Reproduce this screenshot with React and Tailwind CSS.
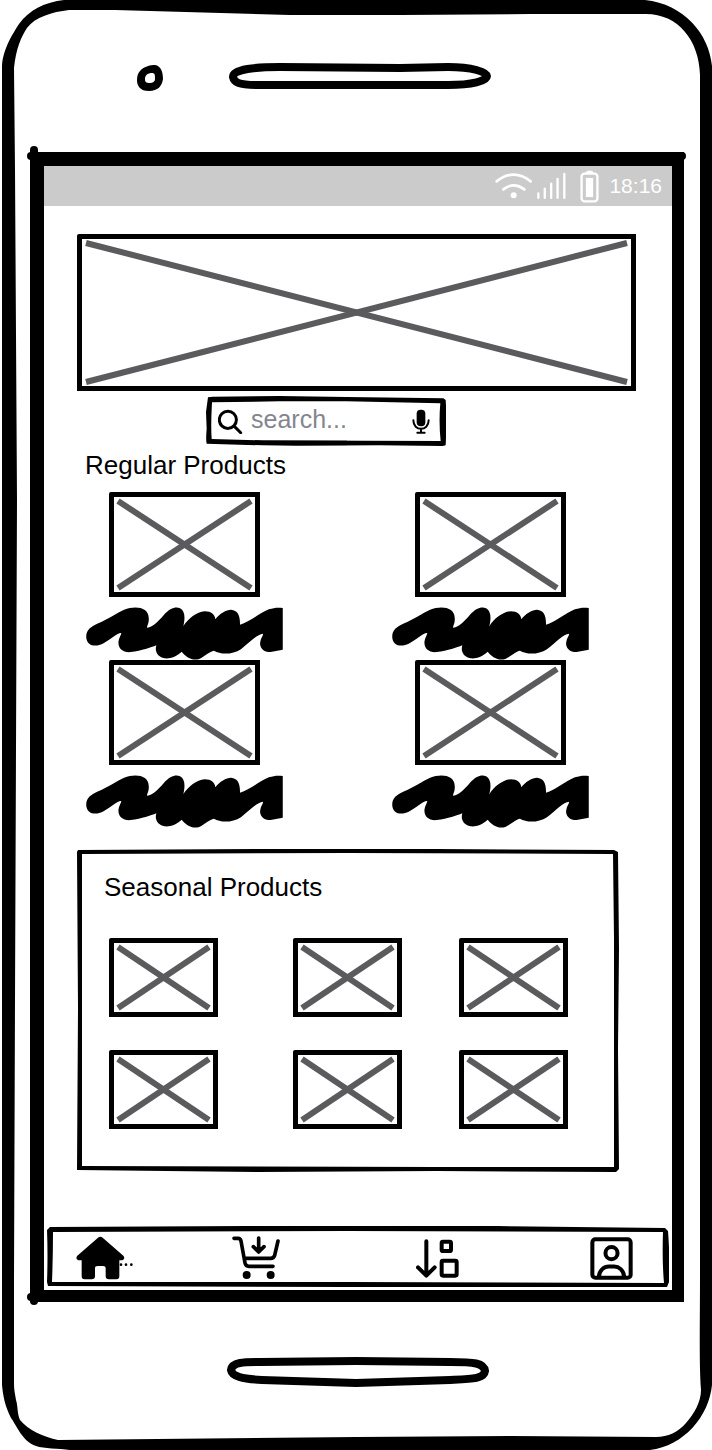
import React from "react";

function CrossBox({ className, label }) {
  return (
    <div role="img" aria-label={label} className={`rounded-tl-xs border-5 border-black p-1 ${className}`}>
      <svg className="block h-full w-full overflow-visible" aria-hidden="true">
        <line x1="0" y1="0" x2="100%" y2="100%" stroke="#5b5b5d" strokeWidth="6" />
        <line x1="0" y1="100%" x2="100%" y2="0" stroke="#5b5b5d" strokeWidth="6" />
      </svg>
    </div>
  );
}

function InkOutline({ viewBox, d }) {
  return (
    <svg
      className="pointer-events-none absolute inset-0 h-full w-full"
      viewBox={viewBox}
      preserveAspectRatio="none"
      aria-hidden="true"
    >
      <path d={d} fillRule="evenodd" />
    </svg>
  );
}

const PHONE =
  "M2 66 C3 48 14 32 19 24 C29 10 45 2 64 0 H645 C684 4 709 34 712 66 V1385 C709 1416 684 1446 650 1450 H70 C58 1448 44 1449 36 1446 C22 1441 17 1426 11 1418 C5 1406 3 1396 2 1385 Z " +
  "M14 68 C16 49 21 37 27 28 C35 17 52 12 69 10 H115 L290 15 L400 15 L530 14 H646 C678 14 699 40 700 75 L700 1270 C700 1330 699 1360 701 1390 C701 1402 694 1414 686 1423 C678 1432 668 1437 656 1437 L510 1436 L356 1437 L58 1440 C44 1437 28 1430 20 1420 C17 1413 18 1406 16 1400 C15 1394 14 1390 14 1384 V1280 L15 1000 L17 500 L15 170 Z";

const SEARCH =
  "M36 36 L50 34 L250 32 L450 35 L740 39 L747 44 Q751 100 747 180 L738 182 L550 180 L300 181 L200 180 L32 175 Q29 165 32 130 L30 80 Z " +
  "M48 51 L250 48 L450 48 L731 54 Q726 110 732 167 L500 166 L200 165 L47 161 Q44 120 48 51 Z";

const PANEL =
  "M1 1 L180 0 L360 0 L537 1 L541 3 L542 100 L541 200 L542 320 L539 323 L360 322 L180 323 L0 321 L1 160 L0 3 Z " +
  "M5 5 L270 4 L536 5 L537 90 L537 318 L360 318 L5 317 L5 160 Z";

const NAV =
  "M3 1 L200 0 L450 0 L618 2 L621 5 Q623 30 622 56 L620 61 L300 61 L1 60 L0 56 Q1 30 0 4 Z " +
  "M6 6 L300 5 L616 6 Q615 35 617 57 L300 56 L5 56 Q6 30 6 6 Z";

function Scribble() {
  return (
    <svg className="block h-[54px] w-[199px]" viewBox="45 380 597 161" role="img" aria-label="Product description">
      <path d="M45 470 C45 450 58 440 80 430 C115 414 135 400 160 388 C195 376 235 380 235 415 C236 430 228 438 230 443 C250 440 262 425 280 405 C300 382 318 378 330 384 C345 392 346 412 340 438 C355 415 380 395 405 393 C425 393 436 403 437 417 C450 400 470 388 485 388 C505 390 513 405 512 434 C540 425 570 400 600 387 C615 382 628 381 642 383 V510 L605 517 C580 517 570 500 574 485 C575 475 584 465 582 461 C565 462 545 485 515 508 C490 524 455 526 433 513 C420 515 405 530 390 537 C370 545 350 535 335 516 C320 530 300 538 283 536 C262 532 252 515 258 496 C240 503 215 512 180 517 C155 519 141 505 143 485 C144 472 153 463 151 459 C140 458 120 478 95 492 C70 504 45 495 45 470 Z" />
    </svg>
  );
}

function StatusBar() {
  return (
    <div className="flex h-10 items-center justify-end bg-[#cbcbcb] pr-2.5 text-white">
      <svg className="h-7 w-[38px]" viewBox="46 36 114 84" fill="none" stroke="currentColor" strokeWidth="8" strokeLinecap="round" aria-label="Wi-Fi">
        <path d="M51 64 Q102 24 153 64 M71 88 Q103 64 134 88" />
        <circle cx="102" cy="106" r="9" fill="currentColor" stroke="none" />
      </svg>
      <svg className="ml-1 h-7 w-[29px]" viewBox="174 38 86 82" stroke="currentColor" strokeWidth="7" strokeLinecap="round" aria-label="Signal">
        <path d="M178 101V114 M197 87V114 M216 72V114 M235 58V114 M255 43V114" />
      </svg>
      <svg className="ml-3.5 h-[33px] w-[19px]" viewBox="302 28 56 100" fill="none" stroke="currentColor" strokeWidth="7" aria-label="Battery">
        <rect x="306" y="39" width="48" height="84" rx="9" />
        <path d="M319 38 Q321 31 326 31 H335 Q340 31 342 38 Z" fill="currentColor" strokeWidth="2" />
        <rect x="319" y="52" width="22" height="58" fill="currentColor" stroke="none" />
      </svg>
      <span className="ml-2.5 text-[21px] leading-8">18:16</span>
    </div>
  );
}

function SearchBox() {
  return (
    <form role="search" className="relative ml-[129px] mt-[5px] flex h-[50px] w-60 items-center px-3" onSubmit={(e) => e.preventDefault()}>
      <InkOutline viewBox="30 32 718 150" d={SEARCH} />
      <label htmlFor="search" className="shrink-0">
        <svg className="h-[25px] w-[25px]" viewBox="65 69 76 76" fill="none" stroke="black" strokeWidth="9" strokeLinecap="round" role="img" aria-label="Search">
          <circle cx="95" cy="102" r="26" />
          <path d="M114 121 L134 141" />
        </svg>
      </label>
      <input
        id="search"
        type="text"
        placeholder="search..."
        className="ml-2 min-w-0 flex-1 bg-transparent pb-1 text-[25px] leading-8 outline-none placeholder:text-[#85858f]"
      />
      <button type="button" aria-label="Voice search">
        <svg className="mr-1 block h-[25px] w-[18px]" viewBox="651 70 54 75" fill="none" stroke="black" strokeWidth="6" strokeLinecap="round">
          <rect x="665" y="72" width="26" height="50" rx="12" fill="black" stroke="none" />
          <path d="M655 104 C655 138 701 138 701 104 M678 130 V141 M667 141 H689" />
        </svg>
      </button>
    </form>
  );
}

function BottomNav() {
  return (
    <nav aria-label="Main" className="relative mx-[3px] mb-0.5 mt-[54px] grid h-[62px] grid-cols-[156fr_185fr_174fr_43px] items-center pl-[29px] pr-9 pt-0.5">
      <InkOutline viewBox="0 0 622 62" d={NAV} />
      <button type="button" aria-label="Home" className="justify-self-start">
        <svg className="block h-[44px] w-[57px]" viewBox="107 63 171 132">
          <path d="M173 68 Q180 63 187 68 L249 122 Q256 132 246 136 H237 V184 Q237 193 228 193 H206 Q196 193 196 183 V160 Q196 153 188 153 H172 Q164 153 164 160 V183 Q164 193 154 193 H133 Q124 193 124 184 V136 H114 Q104 132 111 122 Z" />
          <circle cx="242" cy="149" r="4" />
          <circle cx="257" cy="149" r="4" />
          <circle cx="273" cy="149" r="4" />
        </svg>
      </button>
      <button type="button" aria-label="Cart" className="justify-self-start">
        <svg className="block h-[44px] w-[48px]" viewBox="576 64 144 132" fill="none" stroke="black" strokeWidth="11" strokeLinecap="round" strokeLinejoin="round">
          <path d="M582 71 H594 Q601 71 603 79 L615 145 Q617 155 627 155 H699 M613 131 H692 Q701 131 704 122 L714 79 M656 70 V110 M640 96 L656 112 L672 96" />
          <circle cx="620" cy="181" r="12" fill="black" stroke="none" />
          <circle cx="692" cy="181" r="12" fill="black" stroke="none" />
        </svg>
      </button>
      <button type="button" aria-label="Sort" className="justify-self-start">
        <svg className="block h-[39px] w-[43px]" viewBox="111 70 129 117" fill="none" stroke="black" strokeWidth="12" strokeLinecap="round" strokeLinejoin="round">
          <path d="M142 77 V178 M117 155 L142 180 L167 155" />
          <rect x="188" y="78" width="28" height="28" rx="4" />
          <rect x="188" y="135" width="45" height="45" rx="4" />
        </svg>
      </button>
      <button type="button" aria-label="Account">
        <svg className="block h-[43px] w-[43px]" viewBox="632 65 128 128" fill="none" stroke="black" strokeWidth="12">
          <rect x="639" y="72" width="114" height="114" rx="9" />
          <circle cx="696" cy="113" r="18" />
          <path d="M658 184 C660 163 674 153 688 153 H704 C718 153 732 163 734 184" />
        </svg>
      </button>
    </nav>
  );
}

export default function App() {
  const regular = ["Product 1", "Product 2", "Product 3", "Product 4"];
  const seasonal = ["Item 1", "Item 2", "Item 3", "Item 4", "Item 5", "Item 6"];
  return (
    <div className="relative bg-white pb-[63px] font-['Liberation_Sans',sans-serif] text-black">
      <InkOutline viewBox="0 0 712 1450" d={PHONE} />
      <div className="flex h-[152px] items-start pl-[137px] pt-[63px]" aria-hidden="true">
        <svg className="mt-0.5 h-[26px] w-[26px] shrink-0" viewBox="0 0 26 26">
          <path
            fillRule="evenodd"
            d="M3 6 C7 1 14 0 18 0 C24 1 26 7 26 14 C25 21 21 26 12 26 C3 26 0 21 0 15 C0 11 1 8 3 6 Z M8 14 C8 10 11 8 15 8 C18 8 18 10 18 14 C18 17 15 18 13 18 C9 18 8 17 8 14 Z"
          />
        </svg>
        <svg className="ml-[66px] h-[26px] w-[262px]" viewBox="229 63 262 26" fill="none" stroke="black" strokeWidth="8">
          <path d="M233 77 C233 69 256 67 280 67 L400 68 L448 67 C472 67 487 72 487 76 C487 81 472 85 448 85 H256 C238 85 234 82 233 77 Z" />
        </svg>
      </div>

      <div className="relative ml-[30px] mr-7 border-b-12 border-l-14 border-r-12 border-t-14 border-black">
        <svg className="absolute -left-[18px] -top-5 h-4 w-4" viewBox="0 0 16 16" aria-hidden="true">
          <circle cx="8" cy="4" r="4" />
          <circle cx="5" cy="10" r="4" />
          <path d="M4 4 H12 V14 H4 Z" />
        </svg>
        <svg className="absolute -bottom-[15px] -left-[17px] h-3.5 w-3.5" viewBox="0 0 14 14" aria-hidden="true">
          <circle cx="4" cy="6" r="4" />
          <circle cx="7" cy="10" r="4" />
        </svg>
        <svg className="absolute -right-3.5 -top-3.5 h-2 w-2" viewBox="0 0 8 8" aria-hidden="true">
          <circle cx="4" cy="4" r="4" />
        </svg>
        <StatusBar />
        <main className="pl-[33px] pr-9 pt-7">
          <CrossBox label="Banner" className="h-[157px] w-full" />
          <SearchBox />
          <h2 className="ml-2 mt-[3px] text-[26px] leading-8">Regular Products</h2>
          <ul className="ml-2 mr-[46px] mt-[11px] grid grid-cols-[306fr_199px]">
            {regular.map((name) => (
              <li key={name} className="flex h-[168px] w-[199px] flex-col items-center gap-2.5">
                <CrossBox label={name} className="h-[105px] w-[151px] shrink-0" />
                <Scribble />
              </li>
            ))}
          </ul>
          <section className="relative mr-[17px] mt-[21px] pb-[43px] pl-8 pr-[51px] pt-[22px]">
            <InkOutline viewBox="0 0 542 323" d={PANEL} />
            <h2 className="-ml-[5px] text-[26px] leading-8">Seasonal Products</h2>
            <ul className="mt-[35px] grid grid-cols-[184fr_166fr_109px] gap-y-[33px]">
              {seasonal.map((name) => (
                <li key={name}>
                  <CrossBox label={name} className="h-[79px] w-[109px]" />
                </li>
              ))}
            </ul>
          </section>
        </main>
        <BottomNav />
      </div>

      <svg className="ml-[227px] mt-[55px] block h-[30px] w-[262px]" viewBox="227 1357 262 30" fill="none" stroke="black" strokeWidth="8" aria-hidden="true">
        <path d="M231 1370 C232 1362 244 1362 260 1362 L356 1361 L450 1362 C474 1362 484 1363 485 1371 C484 1379 472 1379 450 1380 L356 1383 L262 1380 C242 1379 232 1376 231 1370 Z" />
      </svg>
    </div>
  );
}
